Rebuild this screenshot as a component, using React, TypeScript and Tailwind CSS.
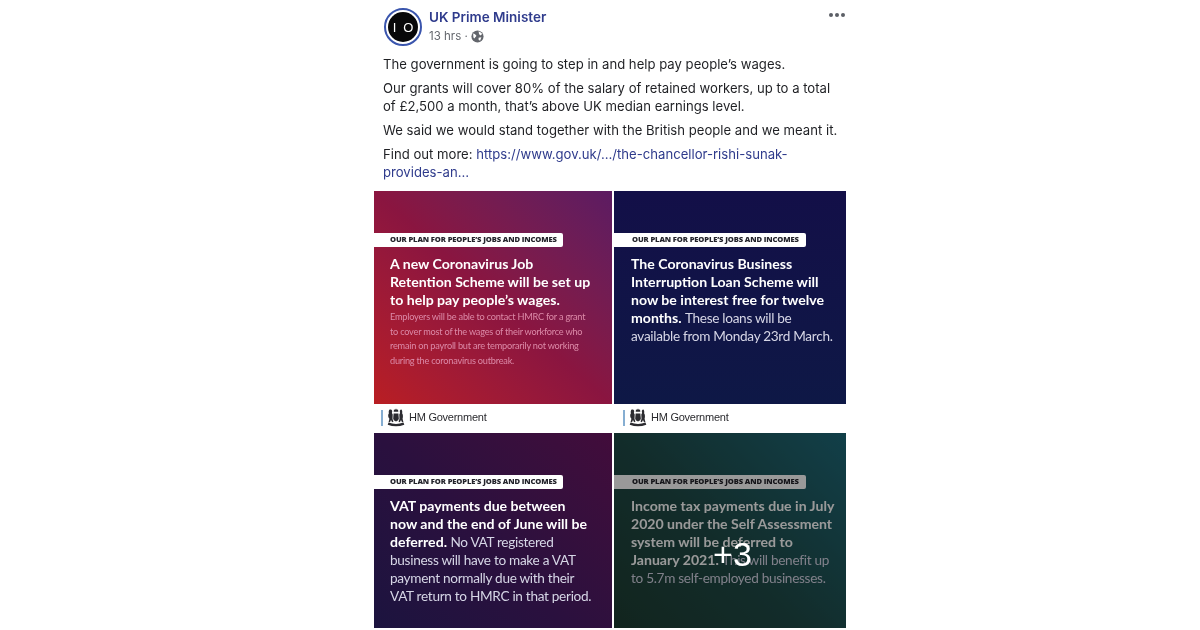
import React from "react";

const cardFont = { fontFamily: 'Lato, "Open Sans", sans-serif' };

function Crest() {
  return (
    <svg width="20" height="19" viewBox="0 0 20 19" className="shrink-0" fill="#2b2b30">
      <path d="M7.600 5.500h4.800l.4 5.200c-.4 1.400-1.400 2.300-2.800 2.800-1.400-.5-2.400-1.400-2.800-2.800z" />
      <path d="M8 1.200l1 .9 1-1.500 1 1.500 1-.9.3 2.600H7.700z" />
      <path d="M3.600 1.600c1.300-.5 2.500.2 2.600 1.400.1.900-.3 1.400-.3 2.100l.8 1.400-.2 4.500 1 2.600-1.400.6-1.100-2.200-1 2.300-1.400-.4.8-3.200C2 9.200 1.700 6.800 2.900 5.200 2.500 4 2.700 2.400 3.600 1.600z" />
      <path d="M16.400 1.600c-1.300-.5-2.500.2-2.600 1.400-.1.900.3 1.400.3 2.100l-.8 1.400.2 4.500-1 2.600 1.400.6 1.100-2.200 1 2.300 1.400-.4-.8-3.200c.4-1.500.7-3.900-.5-5.500.4-1.200.2-2.800-.7-3.600z" />
      <path d="M2.500 14.600c2.500.9 5 1.300 7.500 1.300s5-.4 7.500-1.300l.8 2.200c-2.700 1-5.500 1.500-8.300 1.500s-5.600-.5-8.300-1.500z" />
    </svg>
  );
}

function GovFooter({ right }: { right?: boolean }) {
  return (
    <div className={right ? "flex h-[27px] items-center bg-white pl-[9px]" : "flex h-[27px] items-center bg-white pl-[7px]"}>
      <span className="mr-[3px] h-[16px] w-[2px] bg-[#86aed2]" />
      <Crest />
      <span className="ml-[3px] text-[11px] tracking-[-0.25px] text-[#2a2a2e] [font-family:'Liberation_Sans',sans-serif]">
        HM Government
      </span>
    </div>
  );
}

function Pill({ right }: { right?: boolean }) {
  return (
    <div
      className={
        right
          ? "flex h-[14px] w-[192px] items-center rounded-r-[2px] bg-white pl-[18px] text-[7.6px] font-extrabold tracking-[-0.12px] whitespace-nowrap text-[#24242c] [font-family:'Open_Sans',sans-serif]"
          : "flex h-[14px] w-[189px] items-center rounded-r-[2px] bg-white pl-[16px] text-[7.6px] font-extrabold tracking-[-0.12px] whitespace-nowrap text-[#24242c] [font-family:'Open_Sans',sans-serif]"
      }
    >
      OUR PLAN FOR PEOPLE’S JOBS AND INCOMES
    </div>
  );
}

function Headline({ children, right }: { children: React.ReactNode; right?: boolean }) {
  return (
    <div
      className={
        right
          ? "mt-[8px] pl-[17px] text-[14.1px] leading-[18px] font-bold whitespace-nowrap text-white"
          : "mt-[8px] pl-[16px] text-[14.1px] leading-[18px] font-bold whitespace-nowrap text-white"
      }
      style={cardFont}
    >
      {children}
    </div>
  );
}

function Light({ children }: { children: React.ReactNode }) {
  return <span className="text-[13.6px] font-normal tracking-[-0.3px] text-[#d6d6e6]">{children}</span>;
}

export default function App() {
  return (
    <div className="h-[628px] overflow-hidden bg-white pl-[374px] [font-family:Inter,'Noto_Sans',sans-serif]">
      <div className="w-[472px] blur-[0.35px]">
        {/* 投稿ヘッダー */}
        <div className="flex h-[55px] items-start pt-[8px] pl-[10px]">
          <div className="flex h-[38px] w-[38px] shrink-0 items-center justify-center rounded-full border-2 border-[#3a55ad] bg-white">
            <div className="flex h-[30px] w-[30px] items-center justify-center gap-[7px] rounded-full bg-[#08080a] text-[13px] leading-none text-white [font-family:'Liberation_Sans',sans-serif]">
              <span>I</span>
              <span>O</span>
            </div>
          </div>
          <div className="ml-[7px] flex flex-col">
            <div className="text-[13.5px] leading-[18px] font-semibold text-[#2f3b8c]">UK Prime Minister</div>
            <div className="mt-[2px] flex items-center text-[11.5px] leading-[16px] text-[#63666c]">
              13 hrs ·
              <svg width="13" height="13" viewBox="0 0 12 12" className="ml-[3px]">
                <circle cx="6" cy="6" r="5.600" fill="#63666c" />
                <path d="M2 3.200c1.200.2 2.400 1 3 2.200-.4 1-1.200 1.200-1.600 2.400L2.200 7zM7 1.200c1 .6 2.400 1 3.400 2.400L8.600 5 7.400 3.600zM7 7.200l2.600-.4L8.400 10 7 9z" fill="#fff" />
              </svg>
            </div>
          </div>
          <div className="mt-[5px] mr-[1px] ml-auto flex gap-[2px]">
            <span className="h-[4px] w-[4px] rounded-full bg-[#5c5f66]" />
            <span className="h-[4px] w-[4px] rounded-full bg-[#5c5f66]" />
            <span className="h-[4px] w-[4px] rounded-full bg-[#5c5f66]" />
          </div>
        </div>

        {/* 本文 */}
        <div className="flex h-[136px] flex-col gap-[6px] pl-[9px] text-[13.13px] leading-[18px] text-[#1f2024]">
          <p>The government is going to step in and help pay people’s wages.</p>
          <p>
            Our grants will cover 80% of the salary of retained workers, up to a total
            <br />
            of £2,500 a month, that’s above UK median earnings level.
          </p>
          <p>We said we would stand together with the British people and we meant it.</p>
          <p>
            Find out more: <span className="text-[#2f3b8c]">https://www.gov.uk/…/the-chancellor-rishi-sunak-</span>
            <br />
            <span className="text-[#2f3b8c]">provides-an…</span>
          </p>
        </div>

        {/* 画像グリッド */}
        <div className="grid grid-cols-[238px_232px] gap-[2px]">
          <div className="flex h-[240px] flex-col">
            <div className="h-[213px] bg-gradient-to-tr from-[#b91e22] via-[#8a1540] to-[#5c1b62] pt-[42px]">
              <Pill />
              <Headline>
                A new Coronavirus Job
                <br />
                Retention Scheme will be set up
                <br />
                to help pay people’s wages.
              </Headline>
              <div
                className="mt-[1px] pl-[16px] text-[9.2px] leading-[14.6px] tracking-[-0.22px] whitespace-nowrap text-[#dc8aa8]"
                style={cardFont}
              >
                Employers will be able to contact HMRC for a grant
                <br />
                to cover most of the wages of their workforce who
                <br />
                remain on payroll but are temporarily not working
                <br />
                during the coronavirus outbreak.
              </div>
            </div>
            <GovFooter />
          </div>

          <div className="flex h-[240px] flex-col">
            <div className="h-[213px] bg-gradient-to-b from-[#130f48] to-[#0e1846] pt-[42px]">
              <Pill right />
              <Headline right>
                The Coronavirus Business
                <br />
                Interruption Loan Scheme will
                <br />
                now be interest free for twelve
                <br />
                months. <Light>These loans will be</Light>
                <br />
                <Light>available from Monday 23rd March.</Light>
              </Headline>
            </div>
            <GovFooter right />
          </div>

          <div className="h-[242px] bg-gradient-to-tr from-[#18143f] via-[#2a103e] to-[#420c3b] pt-[42px]">
            <Pill />
            <Headline>
              VAT payments due between
              <br />
              now and the end of June will be
              <br />
              deferred. <Light>No VAT registered</Light>
              <br />
              <Light>business will have to make a VAT</Light>
              <br />
              <Light>payment normally due with their</Light>
              <br />
              <Light>VAT return to HMRC in that period.</Light>
            </Headline>
          </div>

          <div className="relative h-[242px] bg-gradient-to-tr from-[#1d3b2e] via-[#1f4a47] to-[#1d6a7a] pt-[42px]">
            <Pill right />
            <Headline right>
              Income tax payments due in July
              <br />
              2020 under the Self Assessment
              <br />
              system will be deferred to
              <br />
              January 2021. <Light>This will benefit up</Light>
              <br />
              <Light>to 5.7m self-employed businesses.</Light>
            </Headline>
            {/* +3 オーバーレイ */}
            <div className="absolute inset-0 flex items-center justify-center bg-black/40 pl-[5px] text-[34px] text-white [font-family:'Liberation_Sans',sans-serif]">
              +3
            </div>
          </div>
        </div>
      </div>
    </div>
  );
}
